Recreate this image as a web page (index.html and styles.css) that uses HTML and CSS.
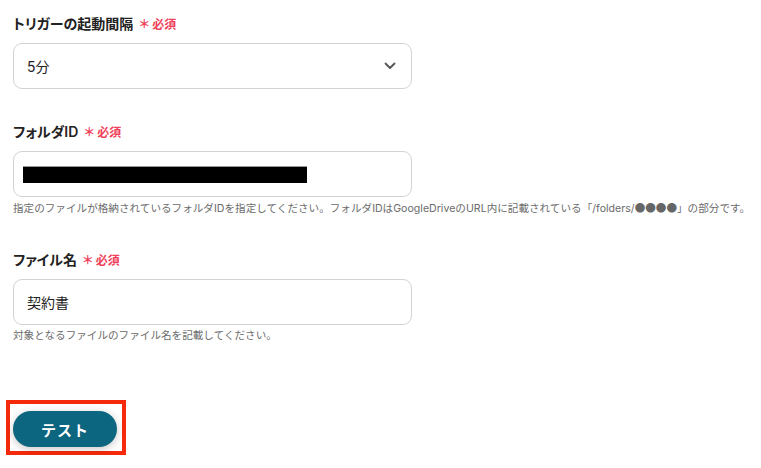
FILE: index.html
```html
<!DOCTYPE html>
<html>

<head>
    <meta charset="UTF-8">
    <title>トリガー設定</title>
    <link rel="stylesheet" href="styles.css">
</head>

<body>
    <div class="form">
        <div class="field">
            <div class="label">トリガーの起動間隔<span class="required">＊ 必須</span></div>
            <div class="select">
                <span>5分</span>
                <svg class="chevron" width="12" height="8" viewBox="0 0 12 8">
                    <path d="M1.5 1.5 L6 6 L10.5 1.5" fill="none" stroke="#555" stroke-width="1.8" stroke-linecap="round" stroke-linejoin="round" />
                </svg>
            </div>
        </div>

        <div class="field">
            <div class="label">フォルダID<span class="required">＊ 必須</span></div>
            <div class="input">
                <span class="redacted"></span>
            </div>
            <div class="help">指定のファイルが格納されているフォルダIDを指定してください。フォルダIDはGoogleDriveのURL内に記載されている「/folders/<span class="dots">●●●●</span>」の部分です。</div>
        </div>

        <div class="field">
            <div class="label">ファイル名<span class="required">＊ 必須</span></div>
            <div class="input">契約書</div>
            <div class="help">対象となるファイルのファイル名を記載してください。</div>
        </div>

        <div class="actions">
            <div class="highlight">
                <button class="test-button">テスト</button>
            </div>
        </div>
    </div>
</body>

</html>
```

FILE: styles.css
```css
body {
    margin: 0;
    padding: 14px 13px 0;
    font-family: Inter, "Noto Sans CJK JP", "Noto Sans", sans-serif;
    background: #fff;
    color: #222;
}

.form {
    width: 399px;
}

.field {
    margin-bottom: 33px;
}

.label {
    font-size: 14px;
    font-weight: 600;
    line-height: 20px;
    font-feature-settings: "palt";
    color: #222;
    margin-bottom: 9px;
}

.required {
    margin-left: 6px;
    font-size: 12px;
    line-height: 1;
    color: #f0415a;
}

.select,
.input {
    box-sizing: border-box;
    display: flex;
    align-items: center;
    height: 46px;
    padding: 0 13px;
    border: 1px solid #d3d3d6;
    border-radius: 9px;
    font-size: 14px;
    color: #222;
}

.select {
    justify-content: space-between;
}

.chevron {
    margin-right: 2px;
}

.input {
    padding-left: 9px;
}

.field:nth-child(3) .input {
    padding-left: 13px;
}

.redacted {
    display: inline-block;
    width: 284px;
    height: 16px;
    background: #000;
    border-top: 1px solid #999;
}

.help {
    margin-top: 3px;
    margin-bottom: 1px;
    font-size: 10.6px;
    line-height: 16px;
    color: #6b6b6b;
    white-space: nowrap;
}

.help .dots {
    font-family: "Noto Sans CJK JP", sans-serif;
    color: #666;
}

.actions {
    margin-top: 56px;
    margin-left: -7px;
}

.highlight {
    display: inline-block;
    padding: 7px 5px 4px 3px;
    border: 4px solid #f52a0c;
}

.test-button {
    display: block;
    width: 104px;
    height: 36px;
    border: none;
    border-radius: 18px;
    background: #0d6680;
    color: #fff;
    font-family: inherit;
    font-size: 15px;
    font-weight: 600;
    letter-spacing: 1px;
    box-shadow: 0 2px 8px rgba(0, 0, 0, 0.22);
    cursor: pointer;
}
```
